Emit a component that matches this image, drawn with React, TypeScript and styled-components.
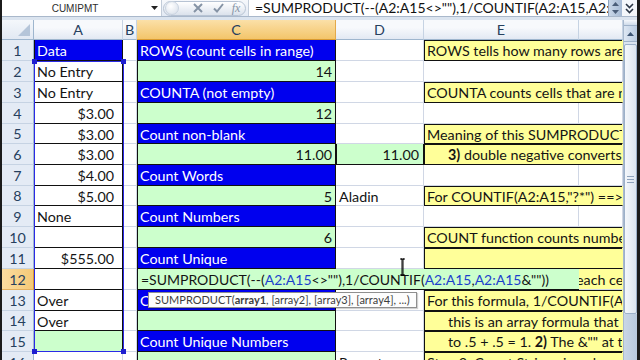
import React from 'react';
import styled, { createGlobalStyle } from 'styled-components';

const GlobalStyle = createGlobalStyle`
  html, body {
    margin: 0;
    padding: 0;
    background: #1b1b1b;
  }
  body {
    width: 640px;
    height: 360px;
    overflow: hidden;
    font-family: Lato, "Liberation Sans", sans-serif;
  }
`;

const ROW_HEIGHTS = [21, 21, 21, 21, 20, 21, 21, 20, 21, 21, 21, 21, 21, 20, 21, 21];

type Fill = 'none' | 'blue' | 'green' | 'yellow';

const fills: Record<Fill, string> = {
  none: '#ffffff',
  blue: '#0000ee',
  green: '#ccffcc',
  yellow: '#ffff99',
};

const Window = styled.div`
  margin-left: 2px;
  width: 635px;
  height: 360px;
  display: flex;
  flex-direction: column;
  overflow: hidden;
  background: #dde6f1;
`;

const FormulaBar = styled.div`
  height: 17px;
  flex-shrink: 0;
  box-sizing: border-box;
  display: grid;
  grid-template-columns: 146px 14px 84px 362px 14px 15px;
  background: linear-gradient(#f6f8fb, #e3eaf4);
  border-bottom: 1px solid #a9b8cb;
  & > * {
    min-width: 0;
    overflow: hidden;
  }
`;

const NameBox = styled.div`
  background: #fff;
  display: flex;
  align-items: center;
  justify-content: center;
  font: 10px "Liberation Sans", Arial, sans-serif;
  color: #2e2e2e;
`;

const NameArrow = styled.div`
  background: #fff;
  border-right: 1px solid #c2ccd9;
  box-sizing: border-box;
  display: flex;
  align-items: center;
  justify-content: center;
`;

const PillSlot = styled.div`
  display: flex;
  align-items: center;
  padding-left: 1px;
`;

const ButtonPill = styled.div`
  width: 83px;
  height: 15px;
  box-sizing: border-box;
  border: 1px solid #b7c3d3;
  border-radius: 8px;
  background: linear-gradient(#ffffff, #dbe2ec);
  display: flex;
  align-items: center;
`;

const Bubble = styled.div`
  width: 12px;
  height: 12px;
  margin-left: 1px;
  flex-shrink: 0;
  border-radius: 50%;
  background: radial-gradient(circle at 40% 35%, #ffffff, #d5dde8);
  border: 1px solid #c9d3e0;
`;

const PillIcon = styled.div<{ $gap: number }>`
  width: 14px;
  flex-shrink: 0;
  margin-left: ${p => p.$gap}px;
  display: flex;
  align-items: center;
  justify-content: center;
`;

const FxLabel = styled.span`
  font: italic 12px "Liberation Serif", serif;
  color: #8593a5;
`;

const FormulaInput = styled.div`
  margin-left: 2px;
  background: #fff;
  border-left: 1px solid #c2ccd9;
  box-sizing: border-box;
  padding-left: 6px;
  font-size: 14px;
  line-height: 16px;
  color: #111;
  white-space: nowrap;
`;

const MiniScroll = styled.div`
  display: flex;
  flex-direction: column;
  align-items: center;
  justify-content: space-around;
  background: linear-gradient(90deg, #c9d7e8, #a6bad4);
  border-left: 1px solid #8ea4c0;
  box-sizing: border-box;
`;

const Expander = styled.div`
  background: #f4f7fb;
  display: flex;
  align-items: center;
  justify-content: center;
`;

const Strip = styled.div`
  height: 3px;
  flex-shrink: 0;
  background: #dbe4ef;
`;

const Sheet = styled.div`
  flex: 1;
  display: flex;
  overflow: hidden;
`;

const Grid = styled.div`
  position: relative;
  width: 621px;
  flex-shrink: 0;
  display: grid;
  grid-template-columns: 32px 89px 14px 199px 88px 155px 44px;
  grid-template-rows: 20px ${ROW_HEIGHTS.map(h => `${h}px`).join(' ')};
  background: #fff;
  font-size: 14.3px;
  overflow: hidden;
`;

const Corner = styled.div`
  background: linear-gradient(#f4f7fb, #e2e9f3);
  border-right: 1px solid #9eb6ce;
  border-bottom: 1px solid #9eb6ce;
  box-sizing: border-box;
  display: flex;
  align-items: flex-end;
  justify-content: flex-end;
  padding: 0 3px 3px 0;
`;

const ColHead = styled.div<{ $active?: boolean }>`
  box-sizing: border-box;
  display: flex;
  align-items: center;
  justify-content: center;
  background: ${p =>
    p.$active ? 'linear-gradient(#fbe0a8, #f3c56a)' : 'linear-gradient(#f7f9fc 40%, #e2e9f3)'};
  border-right: 1px solid ${p => (p.$active ? '#e3a94a' : '#c6d3e3')};
  border-bottom: 1px solid ${p => (p.$active ? '#d99a2f' : '#9eb6ce')};
  color: #26405e;
`;

const RowHead = styled.div<{ $active?: boolean }>`
  box-sizing: border-box;
  display: flex;
  align-items: center;
  justify-content: center;
  background: ${p => (p.$active ? 'linear-gradient(90deg, #fbdca0, #f5c977)' : '#e4ebf5')};
  border-right: 1px solid ${p => (p.$active ? '#d99a2f' : '#9eb6ce')};
  border-bottom: 1px solid ${p => (p.$active ? '#e3b060' : '#c6d3e3')};
  color: #26405e;
`;

type CellProps = {
  $fill: Fill;
  $box?: boolean;
  $top?: boolean;
  $open?: boolean;
  $right?: boolean;
  $span?: number;
  $indent?: number;
  $pad?: number;
};

const Cell = styled.div<CellProps>`
  grid-column: span ${p => p.$span ?? 1};
  box-sizing: border-box;
  background: ${p => fills[p.$fill]};
  border-right: 1px solid ${p => (p.$box && !p.$open ? '#111' : p.$open ? 'transparent' : '#d0d7e5')};
  border-bottom: 1px solid ${p => (p.$box ? '#111' : '#d0d7e5')};
  box-shadow: ${p =>
    p.$box
      ? `inset 1px 0 0 #111${p.$top ? ', inset 0 1px 0 #111' : ''}`
      : 'none'};
  padding: 1px ${p => p.$pad ?? 3}px 0 ${p => p.$indent ?? 3}px;
  text-align: ${p => (p.$right ? 'right' : 'left')};
  color: ${p => (p.$fill === 'blue' ? '#ffffff' : '#141414')};
  line-height: 19px;
  white-space: nowrap;
  overflow: hidden;
`;

const EditCell = styled.div`
  grid-column: span 3;
  box-sizing: border-box;
  background: #ccffcc;
  border-bottom: 1px solid #111;
  box-shadow: inset 1px 0 0 #111;
  padding: 1px 0 0 4px;
  font-size: 14px;
  line-height: 19px;
  color: #141414;
  white-space: nowrap;
  overflow: hidden;
`;

const Ref = styled.span`
  color: #1c3fcc;
`;

const Range = styled.div`
  position: absolute;
  left: 32px;
  top: 41px;
  width: 90px;
  height: 291px;
  box-sizing: border-box;
  border: 1px solid #2a2ae6;
  pointer-events: none;
`;

const Handle = styled.div<{ $x: 'left' | 'right'; $y: 'top' | 'bottom' }>`
  position: absolute;
  width: 5px;
  height: 5px;
  background: #1f1fd0;
  ${p => p.$x}: -3px;
  ${p => p.$y}: -3px;
`;

const Tip = styled.div`
  position: absolute;
  left: 146px;
  top: 272px;
  height: 16px;
  box-sizing: border-box;
  padding: 0 6px 0 6px;
  background: #fdfdfd;
  border: 1px solid #8f8f8f;
  box-shadow: 1px 1px 1px rgba(0, 0, 0, 0.18);
  font-size: 11px;
  line-height: 14px;
  color: #3e3e3e;
  white-space: nowrap;
`;

const Cursor = styled.svg`
  position: absolute;
  left: 397px;
  top: 238px;
`;

const Scrollbar = styled.div`
  width: 14px;
  flex-shrink: 0;
  display: flex;
  flex-direction: column;
  background: #dbe4f0;
  border-left: 1px solid #a8b9ce;
  box-sizing: border-box;
`;

const SplitBox = styled.div`
  height: 5px;
  background: linear-gradient(#f5f8fc, #cfdbea);
  border-bottom: 1px solid #9fb2c9;
`;

const UpButton = styled.div`
  height: 15px;
  display: flex;
  align-items: center;
  justify-content: center;
  background: linear-gradient(90deg, #dde7f3, #b9cbe1);
  border-bottom: 1px solid #9fb2c9;
`;

const Thumb = styled.div`
  height: 270px;
  flex-shrink: 0;
  margin: 2px 0 0 0;
  box-sizing: border-box;
  border: 1px solid #9cb0c9;
  border-radius: 2px;
  background: linear-gradient(90deg, #f4f7fb, #dce5f0);
  display: flex;
  align-items: center;
  justify-content: center;
`;

const Grip = styled.div`
  width: 7px;
  height: 5px;
  border-top: 1px solid #8ea2bc;
  border-bottom: 1px solid #8ea2bc;
  position: relative;
  &::after {
    content: '';
    position: absolute;
    left: 0;
    right: 0;
    top: 2px;
    border-top: 1px solid #8ea2bc;
  }
`;

const Track = styled.div`
  flex: 1;
  background: linear-gradient(90deg, #c9d6e6, #b8c9de);
`;

type Spec = {
  t?: React.ReactNode;
  f?: Fill;
  box?: boolean;
  top?: boolean;
  open?: boolean;
  right?: boolean;
  span?: number;
  indent?: number;
  pad?: number;
};

const blank: Spec = {};
const hdr = (t: React.ReactNode): Spec => ({ t, f: 'blue', box: true });
const grn = (t: React.ReactNode = ''): Spec => ({ t, f: 'green', box: true, right: true });
const dat = (t: React.ReactNode = ''): Spec => ({ t, f: 'none', box: true });
const money = (t: string): Spec => ({ t, f: 'none', box: true, right: true, pad: 8 });
const note = (t: React.ReactNode, indent?: number): Spec => ({
  t,
  f: 'yellow',
  box: true,
  top: true,
  open: true,
  span: 2,
  indent,
});

const formula = (
  <>
    {'=SUMPRODUCT(--('}
    <Ref>A2:A15</Ref>
    {'<>""),1/COUNTIF('}
    <Ref>A2:A15</Ref>
    {','}
    <Ref>A2:A15</Ref>
    {'&""))'}
  </>
);

const rows: Spec[][] = [
  [hdr('Data'), blank, hdr('ROWS (count cells in range)'), blank, note('ROWS tells how many rows are in the range')],
  [dat('No Entry'), blank, grn('14'), blank, blank, blank],
  [dat('No Entry'), blank, hdr('COUNTA (not empty)'), blank, note('COUNTA counts cells that are not empty')],
  [money('$3.00'), blank, grn('12'), blank, blank, blank],
  [money('$3.00'), blank, hdr('Count non-blank'), blank, note('Meaning of this SUMPRODUCT formula:')],
  [
    money('$3.00'),
    blank,
    grn('11.00'),
    { ...grn('11.00'), pad: 4 },
    note(
      <>
        <b>3)</b> double negative converts TRUE/FALSE
      </>,
      24,
    ),
  ],
  [money('$4.00'), blank, hdr('Count Words'), blank, blank, blank],
  [money('$5.00'), blank, grn('5'), { t: 'Aladin', f: 'none' }, note('For COUNTIF(A2:A15,"?*") ==> text only')],
  [dat('None'), blank, hdr('Count Numbers'), blank, blank, blank],
  [dat(''), blank, grn('6'), blank, note('COUNT function counts numbers')],
  [money('$555.00'), blank, hdr('Count Unique'), blank, note('')],
  [],
  [dat('Over'), blank, hdr('Count Unique Words'), blank, note('For this formula, 1/COUNTIF(A2:A15,A2:A15&"")')],
  [dat('Over'), blank, grn(''), blank, note('this is an array formula that', 24)],
  [
    { t: '', f: 'green', box: true },
    blank,
    hdr('Count Unique Numbers'),
    blank,
    note(
      <>
        to .5 + .5 = 1. <b>2)</b> The &amp;"" at the end
      </>,
      24,
    ),
  ],
  [blank, blank, grn(''), { t: 'Repeats', f: 'none' }, note('Step 3: Count Strings in column')],
];

function renderCell(s: Spec, key: string) {
  return (
    <Cell
      key={key}
      $fill={s.f ?? 'none'}
      $box={s.box}
      $top={s.top}
      $open={s.open}
      $right={s.right}
      $span={s.span}
      $indent={s.indent}
      $pad={s.pad}
    >
      {s.t}
    </Cell>
  );
}

export default function App() {
  return (
    <>
      <GlobalStyle />
      <Window>
        <FormulaBar>
          <NameBox>CUMIPMT</NameBox>
          <NameArrow>
            <svg width="7" height="4" viewBox="0 0 7 4">
              <path d="M0 0h7L3.5 4z" fill="#222" />
            </svg>
          </NameArrow>
          <PillSlot>
            <ButtonPill>
              <Bubble />
              <PillIcon $gap={12}>
                <svg width="10" height="10" viewBox="0 0 10 10">
                  <path d="M1 1l8 8M9 1l-8 8" stroke="#8593a5" strokeWidth="2" />
                </svg>
              </PillIcon>
              <PillIcon $gap={6}>
                <svg width="11" height="10" viewBox="0 0 11 10">
                  <path d="M1 5.5l3 3L10 1" stroke="#8593a5" strokeWidth="2" fill="none" />
                </svg>
              </PillIcon>
              <PillIcon $gap={4}>
                <FxLabel>fx</FxLabel>
              </PillIcon>
            </ButtonPill>
          </PillSlot>
          <FormulaInput>=SUMPRODUCT(--(A2:A15&lt;&gt;""),1/COUNTIF(A2:A15,A2:A15&amp;""))</FormulaInput>
          <MiniScroll>
            <svg width="7" height="4" viewBox="0 0 7 4">
              <path d="M0 4h7L3.5 0z" fill="#4a5d78" />
            </svg>
            <svg width="7" height="4" viewBox="0 0 7 4">
              <path d="M0 0h7L3.5 4z" fill="#4a5d78" />
            </svg>
          </MiniScroll>
          <Expander>
            <svg width="9" height="11" viewBox="0 0 9 11">
              <path d="M1 1l3.5 3.5L8 1M1 6l3.5 3.5L8 6" stroke="#2b3646" strokeWidth="1.6" fill="none" />
            </svg>
          </Expander>
        </FormulaBar>
        <Strip />
        <Sheet>
          <Grid>
            <Corner>
              <svg width="12" height="12" viewBox="0 0 12 12">
                <path d="M12 0v12H0z" fill="#b5c5d9" />
              </svg>
            </Corner>
            {['A', 'B', 'C', 'D', 'E', ''].map(c => (
              <ColHead key={c || 'F'} $active={c === 'C'}>
                {c}
              </ColHead>
            ))}
            {rows.map((r, i) => (
              <React.Fragment key={i}>
                <RowHead $active={i === 11}>{i + 1}</RowHead>
                {i === 11 ? (
                  <>
                    {renderCell(dat(''), '12a')}
                    {renderCell(blank, '12b')}
                    <EditCell>{formula}</EditCell>
                    <Cell $fill="yellow" $open $indent={0} style={{ textIndent: -3 }}>
                      each cell
                    </Cell>
                  </>
                ) : (
                  r.map((s, j) => renderCell(s, `${i}-${j}`))
                )}
              </React.Fragment>
            ))}
            <Range>
              <Handle $x="left" $y="top" />
              <Handle $x="right" $y="top" />
              <Handle $x="left" $y="bottom" />
              <Handle $x="right" $y="bottom" />
            </Range>
            <Tip>
              SUMPRODUCT(<b>array1</b>, [array2], [array3], [array4], ...)
            </Tip>
            <Cursor width="7" height="18" viewBox="0 0 7 18">
              <path d="M1 1h2v16H1M6 1H4v16h2M2 1h3M2 17h3" stroke="#000" strokeWidth="1" fill="none" />
            </Cursor>
          </Grid>
          <Scrollbar>
            <SplitBox />
            <UpButton>
              <svg width="7" height="4" viewBox="0 0 7 4">
                <path d="M0 4h7L3.5 0z" fill="#3d5574" />
              </svg>
            </UpButton>
            <Thumb>
              <Grip />
            </Thumb>
            <Track />
          </Scrollbar>
        </Sheet>
      </Window>
    </>
  );
}
